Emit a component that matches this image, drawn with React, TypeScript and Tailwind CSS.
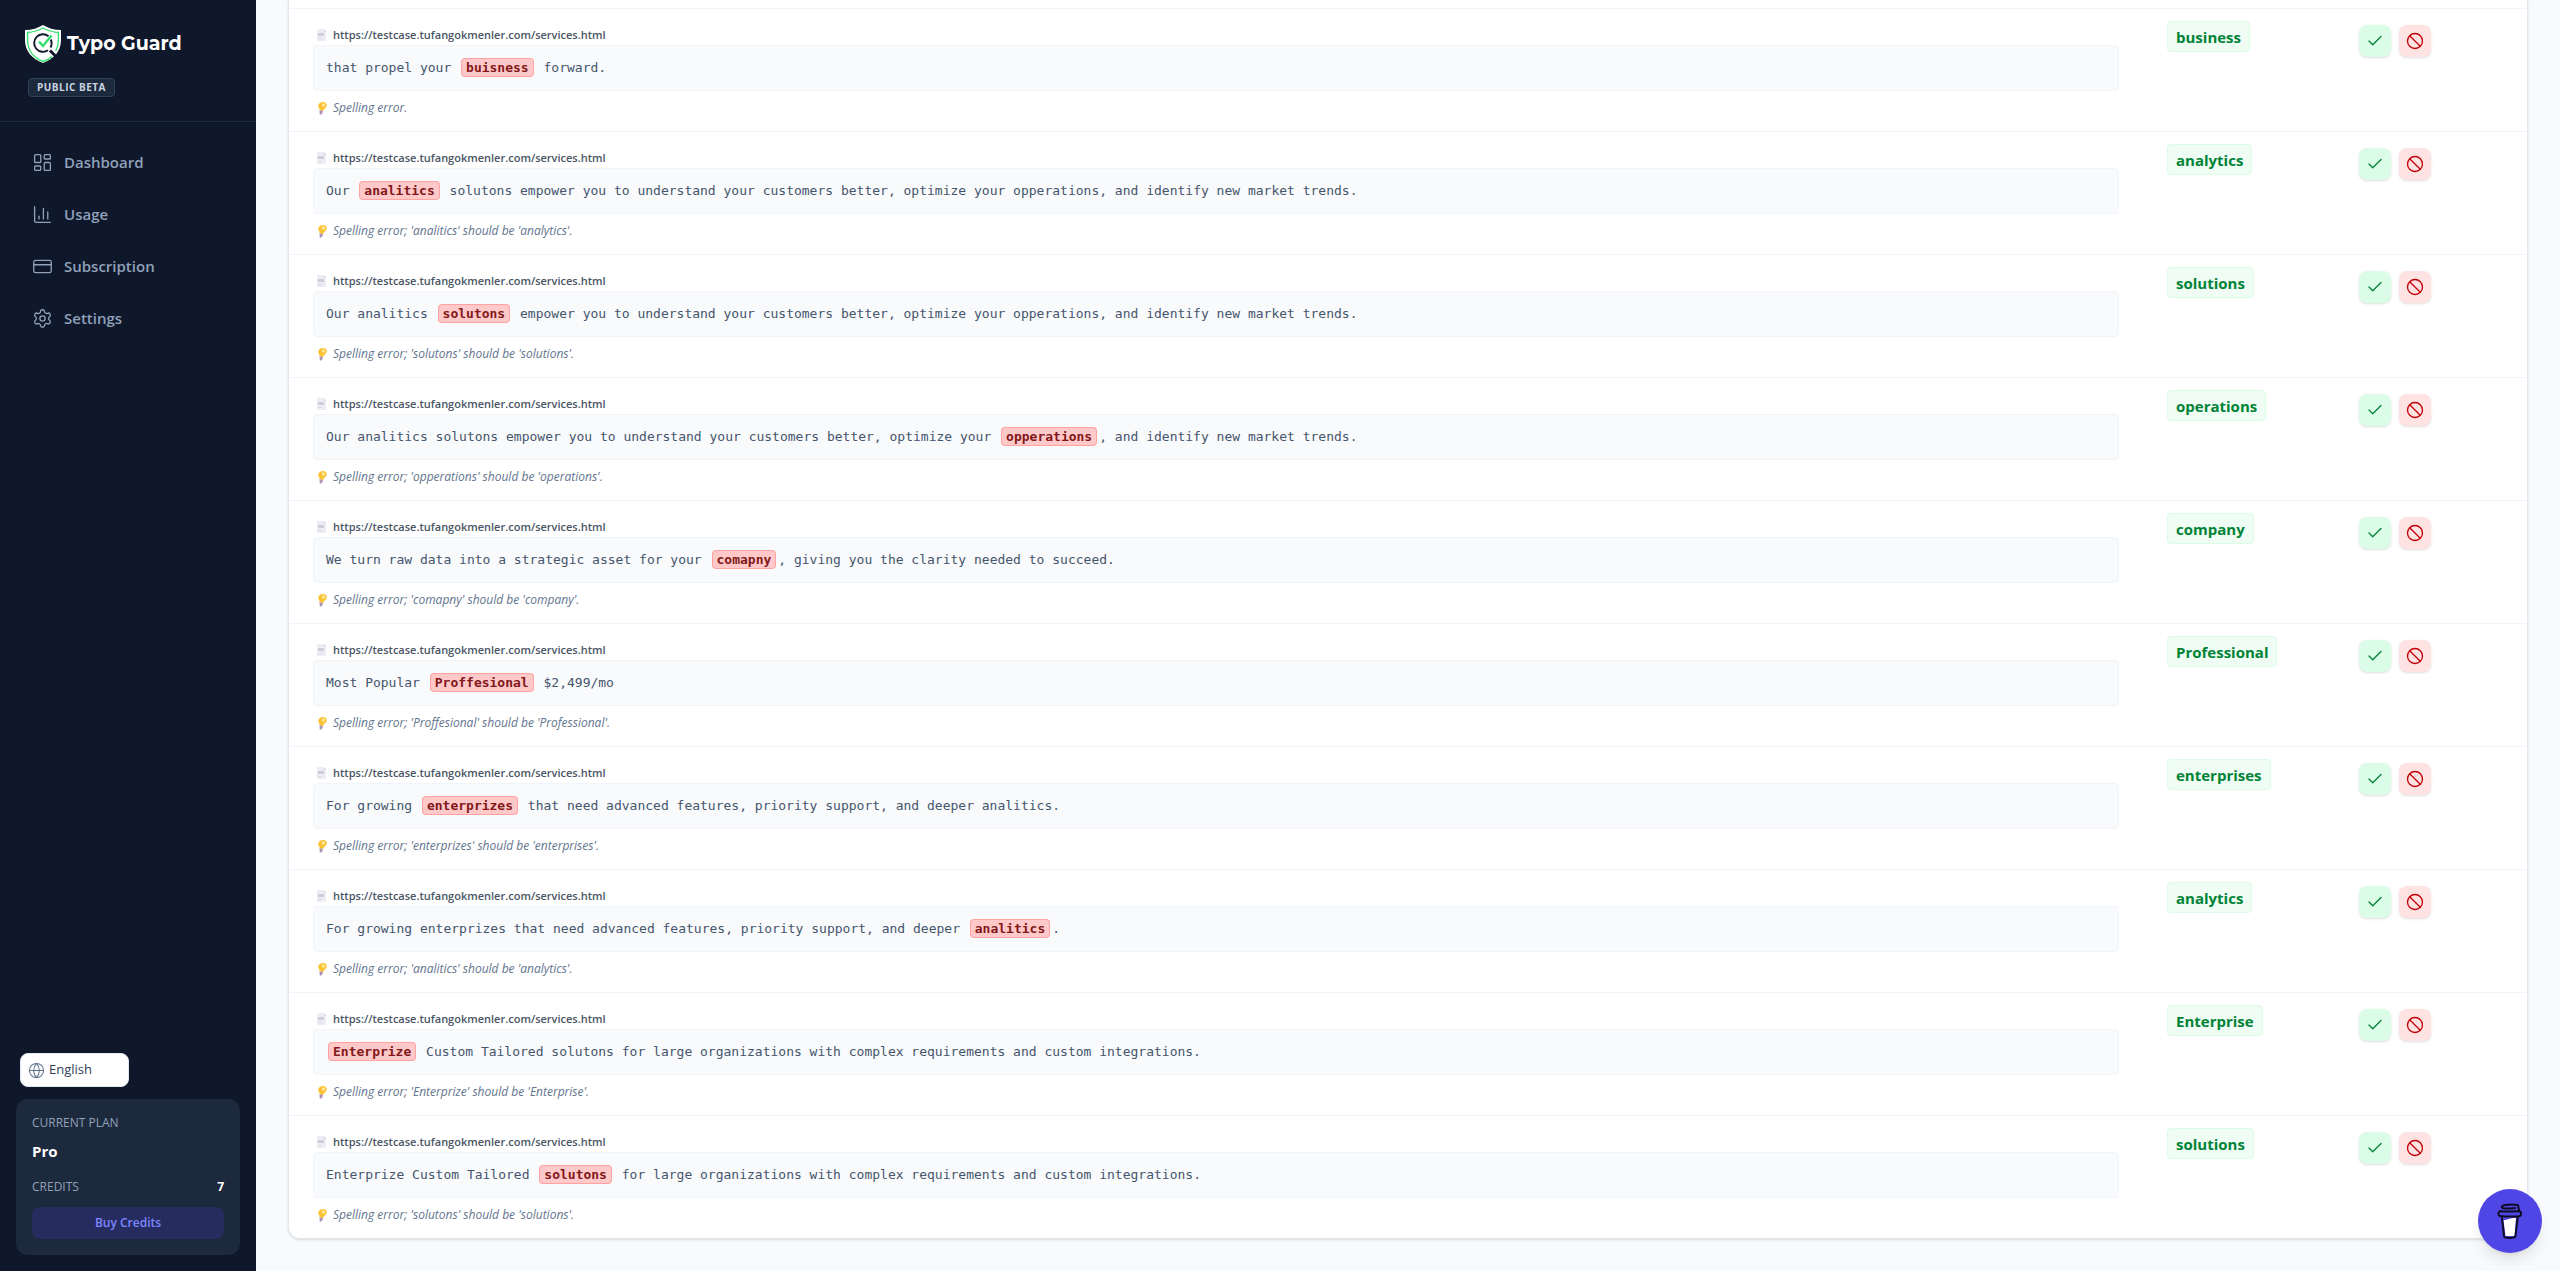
import { Ban, ChartColumn, Check, CreditCard, Globe, LayoutDashboard, Settings } from "lucide-react";

const navItems = [
  { label: "Dashboard", icon: LayoutDashboard },
  { label: "Usage", icon: ChartColumn },
  { label: "Subscription", icon: CreditCard },
  { label: "Settings", icon: Settings },
];

const pageUrl = "https://testcase.tufangokmenler.com/services.html";

type Finding = { before: string; typo: string; after: string; fix: string; hint: string };

const findings: Finding[] = [
  { before: "that propel your ", typo: "buisness", after: " forward.", fix: "business", hint: "Spelling error." },
  {
    before: "Our ",
    typo: "analitics",
    after: " solutons empower you to understand your customers better, optimize your opperations, and identify new market trends.",
    fix: "analytics",
    hint: "Spelling error; 'analitics' should be 'analytics'.",
  },
  {
    before: "Our analitics ",
    typo: "solutons",
    after: " empower you to understand your customers better, optimize your opperations, and identify new market trends.",
    fix: "solutions",
    hint: "Spelling error; 'solutons' should be 'solutions'.",
  },
  {
    before: "Our analitics solutons empower you to understand your customers better, optimize your ",
    typo: "opperations",
    after: ", and identify new market trends.",
    fix: "operations",
    hint: "Spelling error; 'opperations' should be 'operations'.",
  },
  {
    before: "We turn raw data into a strategic asset for your ",
    typo: "comapny",
    after: ", giving you the clarity needed to succeed.",
    fix: "company",
    hint: "Spelling error; 'comapny' should be 'company'.",
  },
  {
    before: "Most Popular ",
    typo: "Proffesional",
    after: " $2,499/mo",
    fix: "Professional",
    hint: "Spelling error; 'Proffesional' should be 'Professional'.",
  },
  {
    before: "For growing ",
    typo: "enterprizes",
    after: " that need advanced features, priority support, and deeper analitics.",
    fix: "enterprises",
    hint: "Spelling error; 'enterprizes' should be 'enterprises'.",
  },
  {
    before: "For growing enterprizes that need advanced features, priority support, and deeper ",
    typo: "analitics",
    after: ".",
    fix: "analytics",
    hint: "Spelling error; 'analitics' should be 'analytics'.",
  },
  {
    before: "",
    typo: "Enterprize",
    after: " Custom Tailored solutons for large organizations with complex requirements and custom integrations.",
    fix: "Enterprise",
    hint: "Spelling error; 'Enterprize' should be 'Enterprise'.",
  },
  {
    before: "Enterprize Custom Tailored ",
    typo: "solutons",
    after: " for large organizations with complex requirements and custom integrations.",
    fix: "solutions",
    hint: "Spelling error; 'solutons' should be 'solutions'.",
  },
];

function ShieldLogo() {
  return (
    <svg width="37" height="38" viewBox="-1 0 37 38" fill="none" aria-hidden="true">
      <path d="M18 0C13 3 7 5 0 5v10c0 11 7 19 18 23 11-4 18-12 18-23V5C29 5 23 3 18 0z" fill="#fff" />
      <path
        d="M27 31.500c-2.500 2.200-5.500 3.900-9 5C9 33 2.600 25.500 2.600 15V7.500C9 7 13.500 5.500 18 3c4.500 2.500 9 4 15.400 4.500V15c0 4.500-1 8-2.800 11"
        stroke="#2fe06d"
        strokeWidth="1.400"
      />
      <path d="M23.500 11.200A8.800 8.800 0 1 0 23 25.300M25.800 14.500a8.800 8.800 0 0 1-.3 8" stroke="#0f172a" strokeWidth="1.900" />
      <path d="M25 25.500l6.500 6.500" stroke="#0f172a" strokeWidth="3" />
      <path d="M14 16.500l4 4.500 8.500-10.500" stroke="#2fe06d" strokeWidth="2.400" />
    </svg>
  );
}

function PageIcon() {
  return (
    <svg width="10" height="12" viewBox="0 0 10 12" className="shrink-0" aria-hidden="true">
      <path d="M0 0h7l2 3v9H0z" fill="#f0ecf6" />
      <path d="M7 0l2 3H7z" fill="#d6d1de" />
      <path d="M1 4h6v3H1z" fill="#d0ccd8" />
      <path d="M1 9.500h4" stroke="#dbd7e2" />
    </svg>
  );
}

function BulbIcon() {
  return (
    <svg width="10" height="13" viewBox="0 0 10 13" className="shrink-0" aria-hidden="true">
      <path d="M6 0c2.500 0 4 1.500 3.800 3.600C9.500 6 7 6.500 6 9L2.500 8.300C3 6.500 1 6 1.200 3.600 1.500 1.500 3.500 0 6 0z" fill="#fcc236" />
      <circle cx="6.500" cy="3" r="1.700" fill="#fde99a" />
      <path d="M2.500 8.300L6 9l-1 3-2.200.8z" fill="#ab94b4" />
    </svg>
  );
}

function CupIcon() {
  return (
    <svg width="26" height="37" viewBox="0 0 26 37" fill="none" stroke="#0d0c22" strokeWidth="2" strokeLinecap="round" strokeLinejoin="round" aria-hidden="true">
      <path d="M6.500 17c3 .5 5-2 12.500-2l-1.500 18h-9z" fill="#fff" stroke="none" />
      <path d="M3 8c6 1.500 15-.5 20 .5 2 1 1 4 0 4.500-5 1-14 .5-20.500 0C1 12 1 9.500 3 8z" />
      <path d="M18 5c-4 .5-9 1-12.500 0C4 4 5 2.300 8 2c4-.6 9-.8 13 .3l1 5" />
      <path d="M5 15l2 18c.2 1 .6 1.500 1.500 1.600 3 .5 6 .5 8.500 0 1-.2 1.300-.6 1.500-1.600l2.200-19" />
    </svg>
  );
}

function Sidebar() {
  return (
    <aside className="sticky top-0 flex h-screen w-64 shrink-0 flex-col bg-slate-900">
      <div className="border-b border-slate-800 px-6 pt-6 pb-6">
        <a href="#" className="flex items-center gap-1.5">
          <ShieldLogo />
          <span className="font-['Montserrat','Inter',sans-serif] text-[19px] leading-10 font-bold text-white">Typo Guard</span>
        </a>
        <div className="mt-3.5 ml-1 flex">
          <span className="rounded border border-slate-700 bg-slate-800 px-2 text-[10px] leading-[17px] font-bold tracking-wider text-slate-300">
            PUBLIC BETA
          </span>
        </div>
      </div>

      <nav className="flex flex-col gap-2 px-4 py-[18px]">
        {navItems.map(({ label, icon: Icon }) => (
          <a key={label} href="#" className="flex h-11 items-center gap-[11px] rounded-lg px-4 text-[15px] font-semibold text-slate-400 hover:text-white">
            <Icon size={21} strokeWidth={1.5} />
            {label}
          </a>
        ))}
      </nav>

      <div className="mt-auto p-4">
        <button type="button" className="ml-1 flex h-[34px] w-[109px] items-center gap-1 rounded-lg border border-slate-200 bg-white px-[7px] text-[13px] text-slate-700">
          <Globe size={17} strokeWidth={1.5} className="text-slate-500" />
          English
        </button>
        <div className="mt-3 rounded-xl bg-slate-800 p-4">
          <p className="text-xs font-medium text-slate-400">CURRENT PLAN</p>
          <p className="mt-2 text-[15px] leading-6 font-bold text-white">Pro</p>
          <div className="mt-4 flex justify-between text-xs">
            <span className="font-medium text-slate-400">CREDITS</span>
            <span className="font-bold text-white">7</span>
          </div>
          <button type="button" className="mt-3 h-8 w-full rounded-lg bg-[#272c60] text-xs font-semibold text-[#7c86ff]">
            Buy Credits
          </button>
        </div>
      </div>
    </aside>
  );
}

function FindingRow({ item }: { item: Finding }) {
  return (
    <tr className="border-b border-slate-100 align-top last:border-b-0">
      <td className="px-6 pt-4 pb-[15px]">
        <div className="flex items-center gap-1.5 pl-1 text-[11px] leading-5 font-semibold text-gray-600">
          <PageIcon />
          {pageUrl}
        </div>
        <div className="rounded border border-slate-100 bg-slate-50 px-3 py-2 font-['DejaVu_Sans_Mono',monospace] text-[13px] leading-7 text-slate-600">
          {item.before}
          <mark className="mx-0.5 rounded border border-red-300 bg-red-200 px-1 py-px font-bold text-red-900">{item.typo}</mark>
          {item.after}
        </div>
        <p className="mt-[9px] flex items-center gap-1.5 pl-1 text-xs leading-4 text-slate-500 italic">
          <BulbIcon />
          {item.hint}
        </p>
      </td>
      <td className="px-6 pt-3">
        <span className="inline-block rounded border border-green-100 bg-green-50 px-2 pt-[5px] pb-[3px] text-[15px] leading-[21px] font-bold text-green-700">
          {item.fix}
        </span>
      </td>
      <td className="px-6 pt-4">
        <div className="flex gap-2">
          <button type="button" aria-label="Accept" className="flex size-8 items-center justify-center rounded-lg bg-green-100 text-green-700 shadow-sm">
            <Check size={18} strokeWidth={1.75} />
          </button>
          <button type="button" aria-label="Ignore" className="flex size-8 items-center justify-center rounded-lg bg-red-100 text-red-700 shadow-sm">
            <Ban size={18} strokeWidth={1.75} />
          </button>
        </div>
      </td>
    </tr>
  );
}

export default function App() {
  return (
    <div className="flex min-h-screen bg-slate-50 font-['Open_Sans',sans-serif]">
      <Sidebar />
      <main className="flex-1 px-8 pb-8">
        <div className="rounded-b-xl border border-t-0 border-slate-200 bg-white shadow-sm">
          <div className="border-b border-slate-100 pt-2" />
          <table className="w-full table-fixed border-collapse" aria-label="Spelling findings">
            <colgroup>
              <col />
              <col className="w-48" />
              <col className="w-48" />
            </colgroup>
            <tbody>
              {findings.map((item, i) => (
                <FindingRow key={i} item={item} />
              ))}
            </tbody>
          </table>
        </div>
      </main>

      <button type="button" aria-label="Buy me a coffee" className="fixed right-[18px] bottom-[18px] flex size-16 items-center justify-center rounded-full bg-[#5046e5] shadow-lg">
        <CupIcon />
      </button>
    </div>
  );
}
